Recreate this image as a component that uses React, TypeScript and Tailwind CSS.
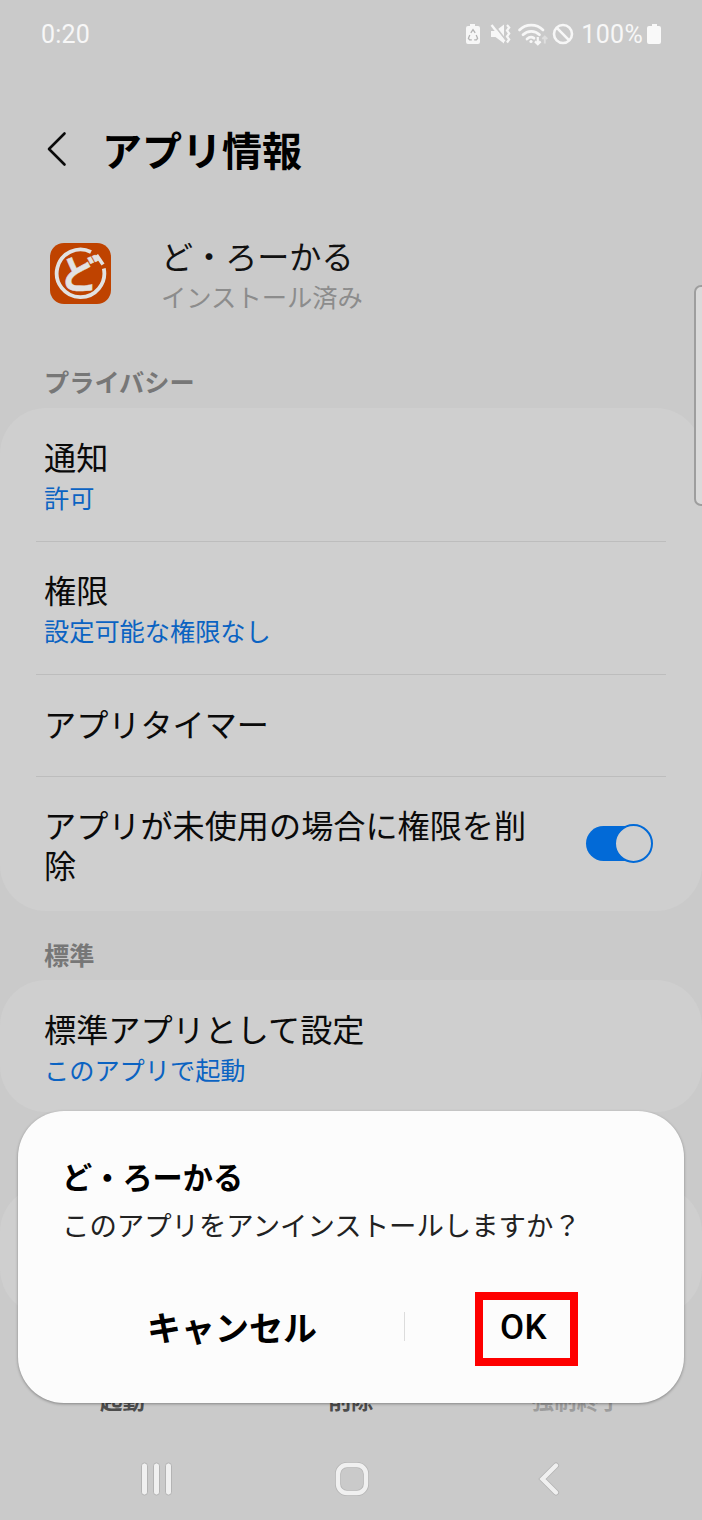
import React from "react";

const jp = "font-['Noto_Sans_CJK_JP',sans-serif]";

function StatusBar() {
    return (
        <div className="flex h-[68px] items-center justify-between pt-px pr-[40px] pl-[41px] font-[Roboto,sans-serif] text-[25px] leading-[30px] text-[#f7f7f7]">
            <span className="tracking-[0.2px]">0:20</span>
            <div className="flex items-center">
                <svg width="114" height="30" viewBox="0 0 114 30" fill="none" className="mr-[2px]">
                    {/* battery saver */}
                    <path d="M5 4h5v2h3a2 2 0 0 1 2 2v14a2 2 0 0 1-2 2H3a2 2 0 0 1-2-2V8a2 2 0 0 1 2-2h2z" fill="#f7f7f7" />
                    <path d="M5.800 12.800 8 9.700l2.200 3.100M11.200 14.900l1.400 3.400-1.200 1.600H9.200M6.800 19.900H4.600l-1.200-1.600 1.400-3.400" stroke="#b4b4b4" strokeWidth="1.300" />
                    {/* vibrate */}
                    <path d="M26 11h4.500L39 4.500v19L30.500 17H26z" fill="#f7f7f7" />
                    <path d="m28 3.500 13 17" stroke="#cacaca" strokeWidth="2" />
                    <path d="m26.500 5 13 16.500" stroke="#f7f7f7" strokeWidth="2.400" />
                    <path d="m42 5 2.200 2.500-2.200 3 2.200 3-2.200 3 2.200 3-2.200 3" stroke="#f7f7f7" strokeWidth="2.200" />
                    {/* wifi */}
                    <path d="M54.500 10c6.500-6.500 17-6.500 23.500 0M58 14.800c4.500-4.600 12-4.600 16.500 0M62 19c2.500-2.300 5-2.300 7-.8" stroke="#f7f7f7" strokeWidth="2.700" strokeLinecap="round" />
                    <circle cx="66" cy="21.500" r="1.600" fill="#f7f7f7" />
                    <path d="M72.800 17v7m-2.800-2.600 2.800 2.800 2.800-2.800" stroke="#f7f7f7" strokeWidth="2.200" />
                    <path d="M79.800 23.500v-7m-2.500 2.500 2.500-2.500 2.500 2.500" stroke="#dedede" strokeWidth="1.900" />
                    {/* no signal */}
                    <circle cx="98" cy="14" r="9" stroke="#f7f7f7" strokeWidth="2.600" />
                    <path d="m91.600 7.700 12.600 12.600" stroke="#f7f7f7" strokeWidth="2.600" />
                </svg>
                <span className="tracking-[0.3px]">100%</span>
                <svg width="15" height="30" viewBox="0 0 15 30" className="ml-[4px]">
                    <path d="M5 4h5v2h2a2 2 0 0 1 2 2v14a2 2 0 0 1-2 2H2a2 2 0 0 1-2-2V8a2 2 0 0 1 2-2h3z" fill="#f9f9f9" />
                </svg>
            </div>
        </div>
    );
}

function AppLogo() {
    return (
        <svg width="62" height="62" viewBox="0 0 62 62" fill="none">
            <rect x="1" y="1" width="61" height="61" rx="14" fill="#bf4300" />
            <path d="M42 10A23.800 23.800 0 1 0 54.800 26.500" stroke="#e2e2e2" strokeWidth="3.800" />
            <text x="11" y="46" fontSize="39" fontWeight="700" fill="#e2e2e2" stroke="#e2e2e2" strokeWidth="0.500">ど</text>
            <path d="m47.500 13 6.500 9.500" stroke="#e2e2e2" strokeWidth="3.600" />
        </svg>
    );
}

function Row({ title, sub }: { title: string; sub?: string }) {
    return (
        <div className={sub ? "h-[133px] pt-[27px]" : "h-[102px] pt-[28px]"}>
            <p className="pl-2 text-[32.15px] leading-[40px] text-[#0a0a0a]">{title}</p>
            {sub && <p className="pl-2 text-[25.2px] leading-[42px] text-[#0b63c2]">{sub}</p>}
        </div>
    );
}

function Toggle() {
    return (
        <div className="flex h-[35px] w-[64px] items-center justify-end rounded-full bg-[#026ad7]">
            <div className="-mr-[3px] h-[39px] w-[39px] shrink-0 rounded-full border-2 border-[#026ad7] bg-[#cfcfcf]" />
        </div>
    );
}

function Dialog() {
    return (
        <div className="absolute top-[1111px] left-[18px] h-[292px] w-[666px] rounded-[46px] bg-[#fcfcfc] pt-[45px] shadow-[0_1px_3px_rgba(0,0,0,0.35)]">
            <h2 className="pl-[44px] text-[30.2px] leading-[40px] font-bold text-black">ど・ろーかる</h2>
            <p className="mt-[6px] pl-[44px] text-[27.4px] leading-[44px] text-[#222]">
                このアプリをアンインストールしますか？
            </p>
            <div className="mt-[46px] flex h-[74px] items-center">
                <button className="ml-[129px] w-[171px] pb-[4px] text-left text-[34px] leading-[44px] font-bold text-black">
                    キャンセル
                </button>
                <span className="mb-[5px] ml-[86px] h-[29px] w-px bg-[#dcdcdc]" />
                <button className="ml-[70px] h-[74px] w-[103px] border-8 border-[#fe0000] pr-[6px] pb-[2px] font-[Roboto,sans-serif] text-[35px] leading-[54px] font-medium tracking-[0.5px] text-black">
                    OK
                </button>
            </div>
        </div>
    );
}

function NavBar() {
    return (
        <div className="flex h-[82px] items-center pl-[139px]">
            <svg width="36" height="36" viewBox="0 0 36 36" fill="#f0f0f0" stroke="#b4b4b4">
                <rect x="2.500" y="2" width="6" height="32" rx="2.800" />
                <rect x="14.500" y="2" width="6" height="32" rx="2.800" />
                <rect x="26.500" y="2" width="6" height="32" rx="2.800" />
            </svg>
            <svg width="36" height="36" viewBox="0 0 36 36" fill="none" className="ml-[159px]">
                <rect x="4" y="4" width="28" height="28" rx="9" stroke="#b4b4b4" strokeWidth="6" />
                <rect x="4" y="4" width="28" height="28" rx="9" stroke="#f0f0f0" strokeWidth="4.400" />
            </svg>
            <svg width="22" height="36" viewBox="0 0 22 36" fill="none" strokeLinecap="round" className="ml-[168px]">
                <path d="M18 4.500 4.500 18 18 31.500" stroke="#b4b4b4" strokeWidth="6" />
                <path d="M18 4.500 4.500 18 18 31.500" stroke="#f0f0f0" strokeWidth="4.400" />
            </svg>
        </div>
    );
}

export default function App() {
    return (
        <div className={`${jp} relative flex h-[1520px] w-[702px] flex-col overflow-hidden bg-[#cacaca]`}>
            <StatusBar />

            <header className="flex h-[164px] items-center pl-[46px]">
                <svg width="24" height="40" viewBox="0 0 24 40" fill="none">
                    <path d="M18.500 3.500 3 19 18.500 34.500" stroke="#0a0a0a" strokeWidth="2.600" strokeLinecap="round" strokeLinejoin="round" />
                </svg>
                <h1 className="ml-[32px] pb-[2px] text-[40px] leading-[52px] font-bold text-black">アプリ情報</h1>
            </header>

            <section className="flex h-[126px] items-start pl-[49px]">
                <div className="pt-[10px]">
                    <AppLogo />
                </div>
                <div className="ml-[50px] pt-[2px]">
                    <p className="text-[32.1px] leading-[42px] text-[#111]">ど・ろーかる</p>
                    <p className="text-[25.3px] leading-[40px] text-[#8c8c8c]">インストール済み</p>
                </div>
            </section>

            <h3 className="h-[50px] pl-[44px] text-[25.2px] leading-[46px] font-bold text-[#777]">プライバシー</h3>
            <div className="h-[503px] rounded-[46px] bg-[#cfcfcf] px-9">
                <div className="divide-y divide-[#bdbdbd] pt-px">
                    <Row title="通知" sub="許可" />
                    <Row title="権限" sub="設定可能な権限なし" />
                    <Row title="アプリタイマー" />
                    <div className="flex h-[134px] items-center justify-between pr-4 pb-px pl-2">
                        <p className="w-[490px] text-[32.15px] leading-[40px] text-[#0a0a0a]">
                            アプリが未使用の場合に権限を削除
                        </p>
                        <Toggle />
                    </div>
                </div>
            </div>

            <h3 className="h-[69px] pt-[21px] pl-[44px] text-[25.2px] leading-[44px] font-bold text-[#777]">標準</h3>
            <div className="h-[132px] rounded-[46px] bg-[#cfcfcf] px-9 pt-px">
                <Row title="標準アプリとして設定" sub="このアプリで起動" />
            </div>
            <div className="mt-[74px] h-[129px] rounded-[46px] bg-[#cfcfcf]" />

            <div className="mt-auto flex h-[54px] text-[22.500px] leading-[30px] font-bold text-[#4c4c4c]">
                <span className="w-[245px] text-center">起動</span>
                <span className="w-[212px] text-center">削除</span>
                <span className="w-[239px] text-center text-[#9c9c9c]">強制終了</span>
            </div>
            <NavBar />

            {/* edge panel handle */}
            <div className="absolute top-[285px] left-[694px] h-[221px] w-[16px] rounded-[7px] border-2 border-[#9e9e9e] bg-[#dadada]" />
            <Dialog />
        </div>
    );
}
